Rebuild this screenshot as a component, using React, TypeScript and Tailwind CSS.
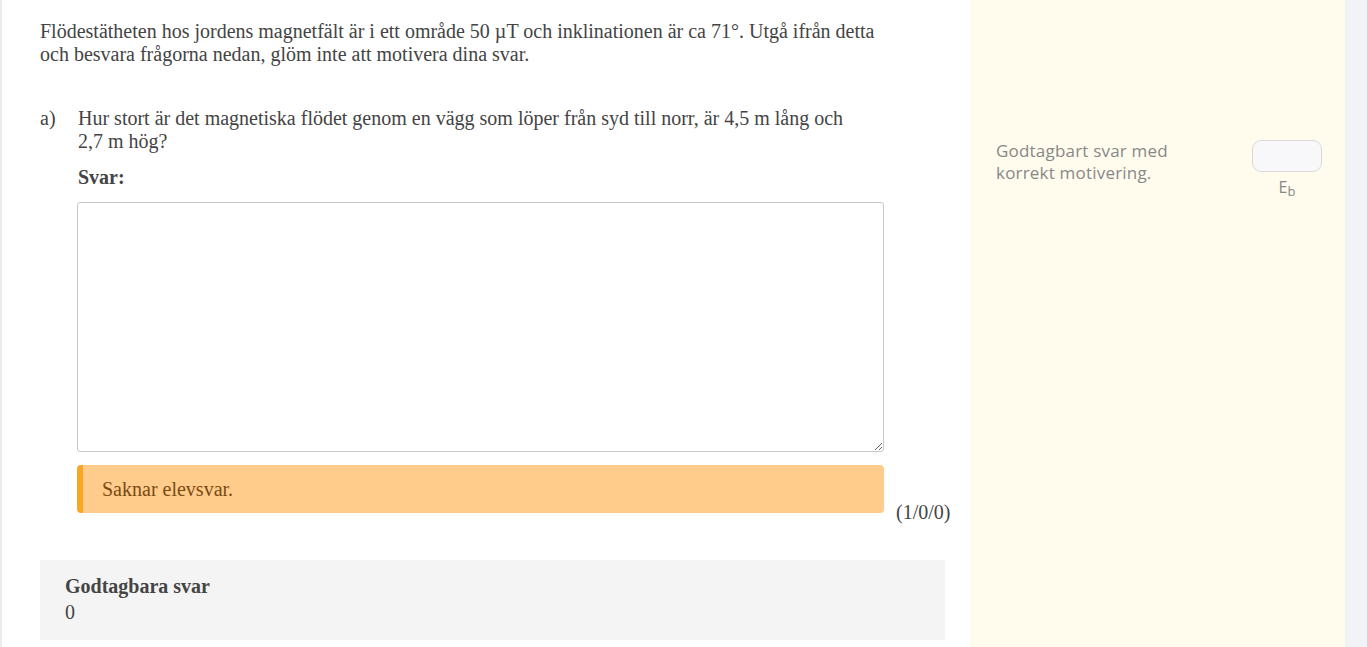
import React from 'react';

export default function App() {
  return (
    <div className="flex min-h-screen bg-white border-l-2 border-[#ebebeb] font-['Liberation_Serif',serif] text-[#444]">
      {/* Question column */}
      <main className="w-[968px] shrink-0 pl-[38px] pr-[25px] pt-[20px] text-[20px] leading-[23px]">
        <p className="max-w-[850px]">
          Flödestätheten hos jordens magnetfält är i ett område 50 µT och inklinationen är ca 71°. Utgå ifrån detta och besvara frågorna nedan, glöm inte att motivera dina svar.
        </p>

        <div className="mt-[41px] flex items-end">
          <div className="flex">
            <span className="w-[37px] shrink-0">a)</span>
            <div className="w-[807px]">
              <p className="max-w-[780px] pl-px">
                Hur stort är det magnetiska flödet genom en vägg som löper från syd till norr, är 4,5 m lång och 2,7 m hög?
              </p>
              <p className="mt-[13px] pl-px font-bold">Svar:</p>
              <textarea
                className="mt-[13px] block h-[250px] w-full rounded-[3px] border border-[#c8c8c8] bg-white"
                readOnly
              />
              <div className="mt-[13px] mb-[12px] flex h-[48px] items-center rounded-[4px] border-l-[6px] border-[#f7a823] bg-[#ffcc8c] pl-[19px] text-[#7a4a12]">
                Saknar elevsvar.
              </div>
            </div>
          </div>
          <span className="ml-[12px] mb-px">(1/0/0)</span>
        </div>

        <div className="mt-[35px] bg-[#f4f4f4] px-[25px] pt-[15px] pb-[16px]">
          <p className="font-bold">Godtagbara svar</p>
          <p className="mt-[3px]">0</p>
        </div>
      </main>

      {/* Assessment panel */}
      <aside className="w-[375px] shrink-0 bg-[#fffcee] pl-[26px] pr-[23px] pt-[140px] font-['Open_Sans',sans-serif] text-[17px] leading-[22px] text-[#888]">
        <div className="flex justify-between">
          <p className="w-[200px] tracking-[0.2px]">Godtagbart svar med korrekt motivering.</p>
          <div className="flex w-[70px] flex-col items-center">
            <div className="h-[32px] w-[70px] rounded-[9px] border border-[#d9d9d9] bg-[#f8f8fa]" />
            <span className="mt-[6px] text-[16px] leading-[18px]">
              E<sub className="text-[13px]">b</sub>
            </span>
          </div>
        </div>
      </aside>

      <div className="flex-1 bg-[#f1f3f6]" />
    </div>
  );
}
